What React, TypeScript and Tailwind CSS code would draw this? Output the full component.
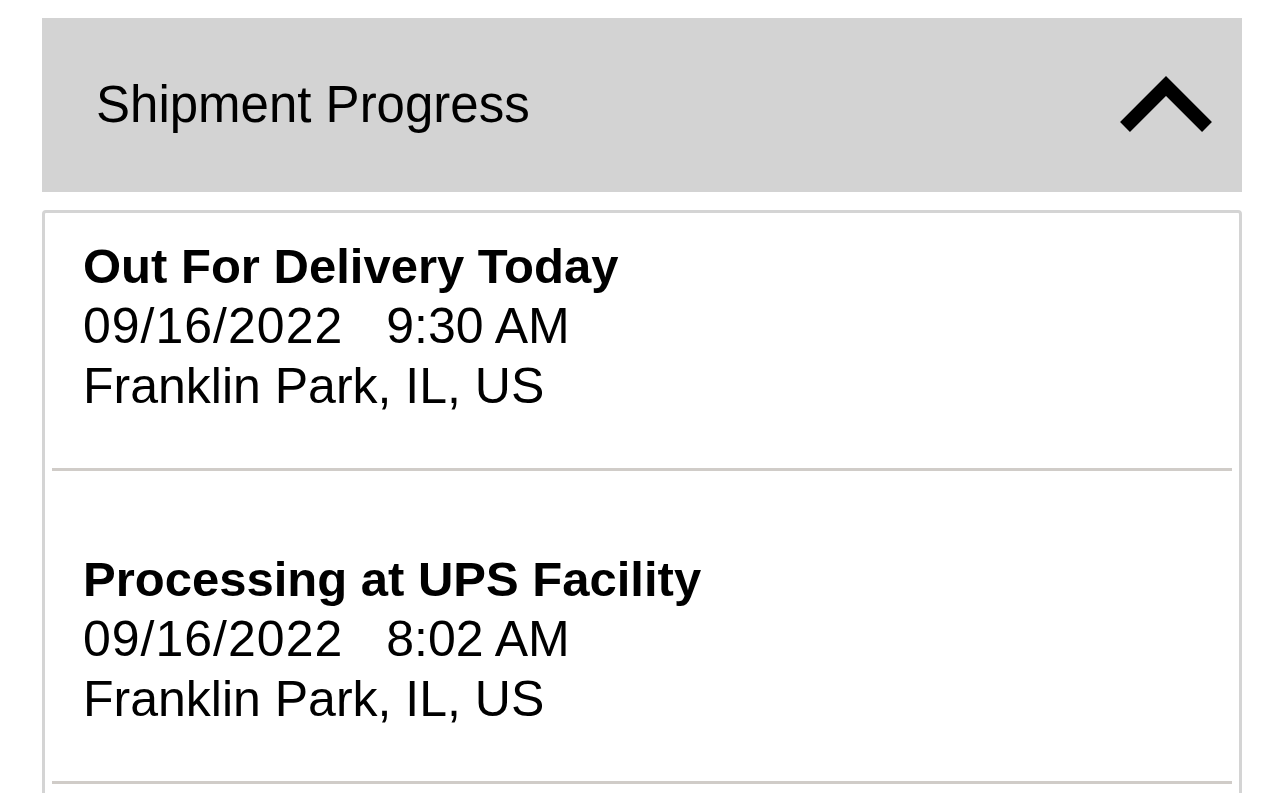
import { useState } from 'react';

interface ProgressEvent {
  status: string;
  date: string;
  time: string;
  location: string;
}

const events: ProgressEvent[] = [
  { status: 'Out For Delivery Today', date: '09/16/2022', time: '9:30 AM', location: 'Franklin Park, IL, US' },
  { status: 'Processing at UPS Facility', date: '09/16/2022', time: '8:02 AM', location: 'Franklin Park, IL, US' },
];

function ChevronUp() {
  return (
    <svg width="96" height="70" viewBox="0 0 96 70" aria-hidden="true">
      <polyline
        points="7,57 48,16 89,57"
        fill="none"
        stroke="#000"
        strokeWidth="14"
        strokeLinecap="butt"
        strokeLinejoin="miter"
      />
    </svg>
  );
}

export default function App() {
  const [open, setOpen] = useState(true);

  return (
    <div className="h-screen overflow-hidden bg-white px-[42px] pt-[18px] font-['Liberation_Sans',Arial,sans-serif] text-black">
      <button
        type="button"
        onClick={() => setOpen(!open)}
        className="flex h-[174px] w-full items-center justify-between bg-[#d3d3d3] pl-[54px] pr-[28px] text-left"
      >
        <span className="text-[51px]">Shipment Progress</span>
        <span className={open ? '' : 'rotate-180'}>
          <ChevronUp />
        </span>
      </button>

      {open && (
        <div className="mt-[18px] rounded-[4px] border-[3px] border-[#d4d4d4]">
          {events.map((ev, i) => (
            <div key={i}>
              <div className={`pl-[38px] pb-[52px] text-[50px] leading-[60px] ${i === 0 ? 'pt-[23px]' : 'pt-[78px]'}`}>
                <div className="text-[49px] font-bold">{ev.status}</div>
                <div>
                  <span className="tracking-[1px]">{ev.date}</span>
                  <span className="ml-[43px]">{ev.time}</span>
                </div>
                <div>{ev.location}</div>
              </div>
              <div className="mx-[7px] h-[3px] bg-[#d0ccc8]" />
            </div>
          ))}
          <div className="h-[60px]" />
        </div>
      )}
    </div>
  );
}
